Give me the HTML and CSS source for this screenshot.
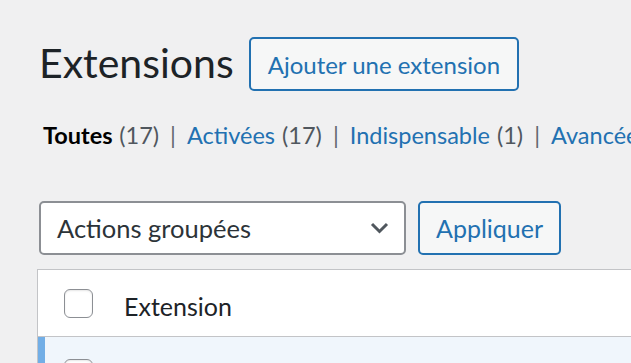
FILE: index.html
```html
<!DOCTYPE html>
<html lang="fr">
<head>
<meta charset="utf-8">
<title>Extensions</title>
<link rel="stylesheet" href="styles.css">
</head>
<body>
<div class="wrap">
  <div class="page-header">
    <h1 class="title">Extensions</h1>
    <a class="btn btn-add" href="#">Ajouter une extension</a>
  </div>
  <ul class="filters">
    <li><a class="current" href="#">Toutes <span class="count">(17)</span></a><span class="sep">|</span></li>
    <li><a href="#">Activées <span class="count">(17)</span></a><span class="sep">|</span></li>
    <li><a href="#">Indispensable <span class="count">(1)</span></a><span class="sep">|</span></li>
    <li><a href="#">Avancées <span class="count">(2)</span></a></li>
  </ul>
  <div class="bulk">
    <div class="select">
      <span>Actions groupées</span>
      <svg class="chev" width="19" height="12" viewBox="0 0 19 12"><polyline points="2,2 9.5,9.5 17,2" fill="none" stroke="#50575e" stroke-width="3"/></svg>
    </div>
    <a class="btn btn-apply" href="#">Appliquer</a>
  </div>
</div>
<div class="table">
  <div class="row head">
    <span class="cb"></span>
    <span class="col-name">Extension</span>
  </div>
  <div class="row active">
    <span class="cb"></span>
  </div>
</div>
</body>
</html>
```
FILE: styles.css
```css
html, body {
  margin: 0;
  padding: 0;
  background: #f0f0f1;
  overflow: hidden;
}
body {
  font-family: "Lato", "Liberation Sans", sans-serif;
  color: #3c434a;
  width: 631px;
  height: 363px;
}
.wrap {
  padding-left: 39px;
}
.page-header {
  display: flex;
  align-items: flex-start;
  padding-top: 36px;
}
.title {
  margin: 0;
  font-size: 41px;
  line-height: 54px;
  font-weight: 400;
  color: #1d2327;
}
.btn {
  box-sizing: border-box;
  display: flex;
  align-items: center;
  height: 54px;
  border: 2px solid #2271b1;
  border-radius: 5px;
  background: #f6f7f7;
  color: #2271b1;
  font-size: 25px;
  text-decoration: none;
}
.btn-add {
  margin: 1px 0 0 15px;
  padding: 0 17px;
  font-size: 24px;
}
.filters {
  list-style: none;
  margin: 29px 0 0 4px;
  padding: 0;
  display: flex;
  white-space: nowrap;
  font-size: 23.5px;
  line-height: 30px;
  color: #646970;
}
.filters a {
  color: #2271b1;
  text-decoration: none;
}
.filters a.current {
  color: #000;
  font-weight: 700;
}
.filters .count {
  color: #50575e;
  font-weight: 400;
  margin-left: 1px;
}
.sep {
  margin: 0 11px;
}
.bulk {
  display: flex;
  margin-top: 51px;
  gap: 12px;
}
.select {
  box-sizing: border-box;
  width: 367px;
  height: 54px;
  display: flex;
  align-items: center;
  justify-content: space-between;
  padding: 0 15px 0 16px;
  border: 2px solid #8c8f94;
  border-radius: 5px;
  background: #fff;
  color: #2c3338;
  font-size: 25.5px;
}
.chev {
  display: block;
}
.btn-apply {
  padding: 0 16px;
}
.table {
  margin: 14px 0 0 37px;
  width: 700px;
  border: 1px solid #c3c4c7;
  border-right: none;
  background: #fff;
}
.row {
  display: flex;
  align-items: center;
  padding-left: 26px;
  height: 66px;
}
.row.head {
  border-bottom: 1px solid #c3c4c7;
}
.row.active {
  background: #f0f6fc;
  box-shadow: inset 7px 0 0 #72aee6;
  align-items: flex-start;
  padding-top: 22px;
  height: 60px;
}
.cb {
  box-sizing: border-box;
  width: 29px;
  height: 29px;
  border: 1.5px solid #8c8f94;
  border-radius: 6px;
  background: #fff;
  box-shadow: inset 0 1px 2px rgba(0,0,0,0.1);
}
.col-name {
  margin-left: 31px;
  padding-top: 5px;
  font-size: 25px;
  color: #1d2327;
}
```
